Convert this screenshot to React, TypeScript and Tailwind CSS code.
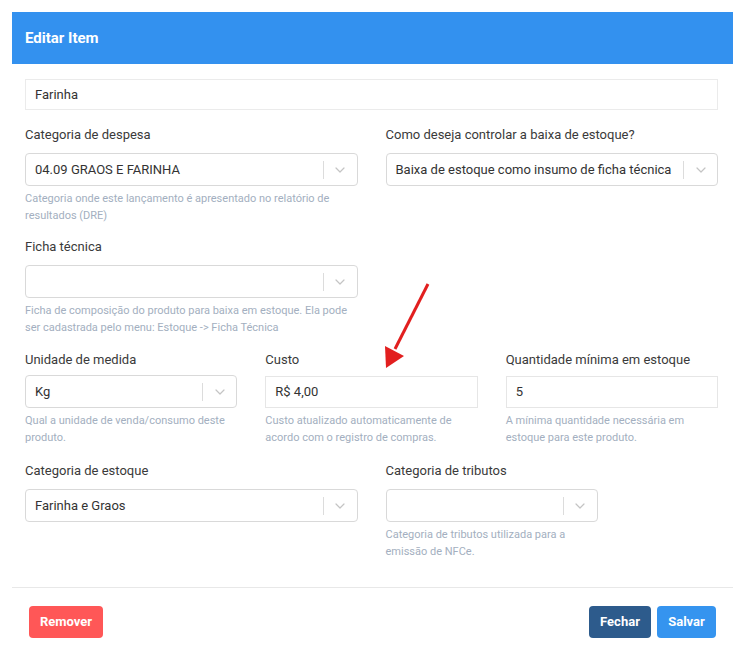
import React from "react";

function Chevron() {
	return (
		<svg width="10" height="6" viewBox="0 0 10 6" fill="none" className="text-[#c4c4c4]">
			<path d="M1 1l4 4 4-4" stroke="currentColor" strokeWidth="1.2" strokeLinecap="round" strokeLinejoin="round" />
		</svg>
	);
}

function Label({ children, tight }: { children: React.ReactNode; tight?: boolean }) {
	return (
		<div className={`h-4 text-[13px] leading-4 text-[#3a3a3a] ${tight ? "mb-[8px]" : "mb-[10px]"}`}>
			{children}
		</div>
	);
}

function Help({ children }: { children: React.ReactNode }) {
	return <p className="mt-[4px] text-[11px] leading-[17px] text-[#a3afc0]">{children}</p>;
}

function Select({ value, className = "" }: { value?: string; className?: string }) {
	return (
		<div
			className={`flex h-[33px] items-center rounded-[4px] border border-[#d9d9d9] bg-white pl-[9px] ${className}`}>
			<span className="flex-1 truncate text-[13px] text-[#333]">{value}</span>
			<span className="h-[18px] w-px bg-[#dcdcdc]" />
			<span className="flex w-[33px] items-center justify-center">
				<Chevron />
			</span>
		</div>
	);
}

function Input({ value }: { value: string }) {
	return (
		<div className="flex h-[32px] items-center border border-[#e6e6e6] bg-white pl-[9px] text-[13px] text-[#333]">
			{value}
		</div>
	);
}

export default function App() {
	return (
		<div className="relative min-h-[659px] bg-white font-['Roboto',sans-serif]">
			<div className="ml-[12px] w-[721px] pt-[12px]">
				<div className="flex h-[52px] items-center bg-[#3391ef] pl-[13px] text-[15px] font-bold text-white">
					Editar Item
				</div>

				<div className="pl-[13px] pr-[15px] pt-[15px] pb-[27px]">
					<div className="flex h-[31px] items-center border border-[#ebebeb] pl-[9px] text-[13px] text-[#333]">
						Farinha
					</div>

					<div className="mt-[17px] grid grid-cols-2 gap-x-[28px]">
						<div>
							<Label>Categoria de despesa</Label>
							<Select value="04.09 GRAOS E FARINHA" />
							<Help>Categoria onde este lançamento é apresentado no relatório de resultados (DRE)</Help>
						</div>
						<div>
							<Label>Como deseja controlar a baixa de estoque?</Label>
							<Select value="Baixa de estoque como insumo de ficha técnica" />
						</div>
					</div>

					<div className="mt-[15px] grid grid-cols-2 gap-x-[28px]">
						<div>
							<Label>Ficha técnica</Label>
							<Select />
							<Help>
								Ficha de composição do produto para baixa em estoque. Ela pode ser cadastrada pelo menu:
								Estoque -&gt; Ficha Técnica
							</Help>
						</div>
					</div>

					<div className="mt-[16px] grid grid-cols-3 gap-x-[28px]">
						<div>
							<Label tight>Unidade de medida</Label>
							<Select value="Kg" className="-mt-px" />
							<Help>Qual a unidade de venda/consumo deste produto.</Help>
						</div>
						<div>
							<Label tight>Custo</Label>
							<Input value="R$ 4,00" />
							<Help>Custo atualizado automaticamente de acordo com o registro de compras.</Help>
						</div>
						<div>
							<Label tight>Quantidade mínima em estoque</Label>
							<Input value="5" />
							<Help>A mínima quantidade necessária em estoque para este produto.</Help>
						</div>
					</div>

					<div className="mt-[17px] grid grid-cols-2 gap-x-[28px]">
						<div>
							<Label>Categoria de estoque</Label>
							<Select value="Farinha e Graos" />
						</div>
						<div>
							<Label>Categoria de tributos</Label>
							<Select className="w-[212px]" />
							<div className="w-[212px]">
								<Help>Categoria de tributos utilizada para a emissão de NFCe.</Help>
							</div>
						</div>
					</div>
				</div>

				<div className="flex items-center justify-between border-t border-[#e8e8e8] px-[17px] pt-[18px] pb-[21px]">
					<button className="h-[32px] rounded-[4px] bg-[#ff5757] px-[11px] text-[13px] font-bold text-white">
						Remover
					</button>
					<div className="flex gap-[6px]">
						<button className="h-[32px] w-[62px] rounded-[4px] bg-[#2d5b8c] text-[13px] font-bold text-white">
							Fechar
						</button>
						<button className="h-[32px] w-[59px] rounded-[4px] bg-[#3594ef] text-[13px] font-bold text-white">
							Salvar
						</button>
					</div>
				</div>
			</div>

			<svg className="pointer-events-none absolute left-0 top-0" width="739" height="659">
				<line x1="428" y1="284" x2="395" y2="349" stroke="#e21f1f" strokeWidth="3" />
				<polygon points="386,368 385,346 404,356" fill="#e21f1f" />
			</svg>
		</div>
	);
}
